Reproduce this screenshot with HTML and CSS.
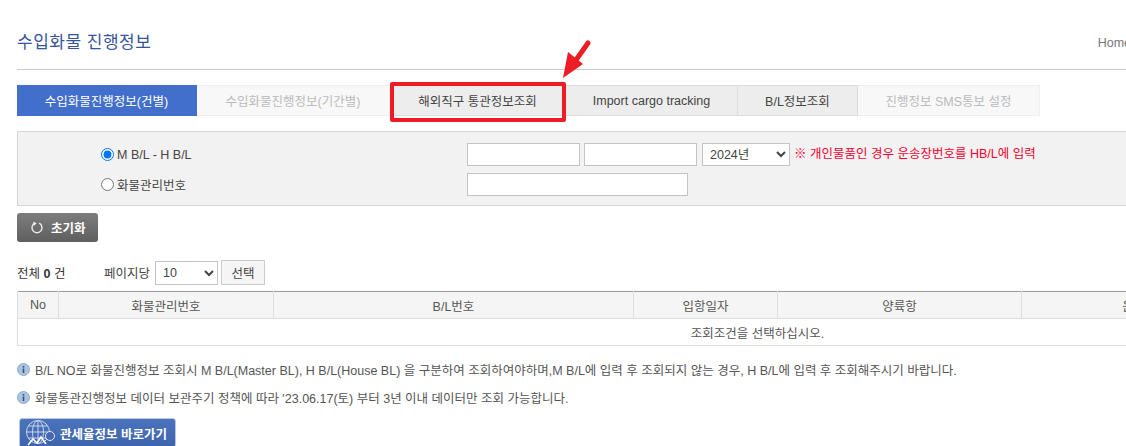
FILE: index.html
```html
<!DOCTYPE html>
<html lang="ko">
  <head>
    <meta charset="UTF-8" />
    <meta name="viewport" content="width=device-width, initial-scale=1.0" />
    <title>수입화물 진행정보</title>
    <link rel="stylesheet" href="styles.css">
  </head>
  <body>
    <div class="page">
      <div class="head">
        <h1 class="title">수입화물 진행정보</h1>
        <span class="home">Home</span>
      </div>

      <ul class="tabs">
        <li class="tab tab-active">수입화물진행정보(건별)</li>
        <li class="tab tab-off">수입화물진행정보(기간별)</li>
        <li class="tab tab-on">해외직구 통관정보조회</li>
        <li class="tab tab-on">Import cargo tracking</li>
        <li class="tab tab-on">B/L정보조회</li>
        <li class="tab tab-off">진행정보 SMS통보 설정</li>
      </ul>

      <form class="search">
        <div class="search-row">
          <label class="radio-label"><input type="radio" name="kind" checked />M B/L - H B/L</label>
          <input type="text" class="text-box" />
          <input type="text" class="text-box" />
          <select class="year"><option>2024년</option></select>
          <span class="warn">※ 개인물품인 경우 운송장번호를 HB/L에 입력</span>
        </div>
        <div class="search-row">
          <label class="radio-label"><input type="radio" name="kind" />화물관리번호</label>
          <input type="text" class="text-box text-wide" />
        </div>
      </form>

      <button type="button" class="reset">
        <svg width="14" height="14" viewBox="0 0 14 14"><path d="M4.800 2.200a5 5 0 1 0 4.400 0" fill="none" stroke="#eee" stroke-width="1.400"/><path d="M3.400.600 6.600 2.300 4 4.800z" fill="#eee"/></svg>
        초기화
      </button>

      <div class="list-bar">
        <span class="total">전체 <b>0</b> 건</span>
        <span class="per-page">페이지당</span>
        <select class="per-select"><option>10</option></select>
        <button type="button" class="pick">선택</button>
      </div>

      <table class="result">
        <colgroup>
          <col class="c-no"><col class="c-id"><col class="c-bl"><col class="c-date"><col class="c-port"><col class="c-ship"><col class="c-last">
        </colgroup>
        <thead>
          <tr><th>No</th><th>화물관리번호</th><th>B/L번호</th><th>입항일자</th><th>양륙항</th><th>운송사</th><th>진행상태</th></tr>
        </thead>
        <tbody>
          <tr><td colspan="7">조회조건을 선택하십시오.</td></tr>
        </tbody>
      </table>

      <p class="note">
        <svg class="info" width="13" height="13" viewBox="0 0 13 13"><circle cx="6.500" cy="6.500" r="6" fill="#a9c4e2" stroke="#8fa9c6"/><rect x="5.700" y="5.500" width="1.600" height="4.500" fill="#3d4f66"/><rect x="5.700" y="3" width="1.600" height="1.600" fill="#3d4f66"/></svg>
        B/L NO로 화물진행정보 조회시 M B/L(Master BL), H B/L(House BL) 을 구분하여 조회하여야하며,M B/L에 입력 후 조회되지 않는 경우, H B/L에 입력 후 조회해주시기 바랍니다.
      </p>
      <p class="note">
        <svg class="info" width="13" height="13" viewBox="0 0 13 13"><circle cx="6.500" cy="6.500" r="6" fill="#a9c4e2" stroke="#8fa9c6"/><rect x="5.700" y="5.500" width="1.600" height="4.500" fill="#3d4f66"/><rect x="5.700" y="3" width="1.600" height="1.600" fill="#3d4f66"/></svg>
        화물통관진행정보 데이터 보관주기 정책에 따라 '23.06.17(토) 부터 3년 이내 데이터만 조회 가능합니다.
      </p>

      <a class="rate-link">
        <svg width="32" height="28" viewBox="0 0 32 28">
          <g fill="none" stroke="#c9d6ee" stroke-width="1">
            <circle cx="13" cy="13" r="11.500"/>
            <ellipse cx="13" cy="13" rx="5.500" ry="11.500"/>
            <path d="M13 1.500v23M1.500 13h23M3.500 7h19M3.500 19h19"/>
          </g>
          <circle cx="25" cy="17" r="4.500" fill="#4468b2" stroke="#dfe7f6"/>
          <path d="M3 26l5-6 4 4 4-6 5 7" fill="none" stroke="#fff" stroke-width="1.600"/>
        </svg>
        관세율정보 바로가기
      </a>

      <div class="callout"></div>
      <svg class="arrow" width="34" height="42" viewBox="0 0 34 42">
        <path d="M29 3 17 20" stroke="#ee1c25" stroke-width="5" stroke-linecap="round" fill="none"/>
        <path d="M4 38 9 12 24 24z" fill="#ee1c25"/>
      </svg>
    </div>
  </body>
</html>
```

FILE: styles.css
```css
* {
  box-sizing: border-box;
}

html, body {
  margin: 0;
  height: 446px;
  overflow: hidden;
  background: #fff;
}

body {
  font-family: "Liberation Sans", "Noto Sans CJK KR", sans-serif;
  font-size: 12.5px;
  color: #555;
}

.page {
  position: relative;
  width: 1500px;
  padding-left: 17px;
}

.head {
  display: flex;
  justify-content: space-between;
  width: 1114px;
  height: 69px;
  padding: 31px 0 0;
}

.title {
  margin: 0;
  font-size: 17px;
  line-height: 24px;
  letter-spacing: .5px;
  font-weight: 400;
  color: #36549c;
}

.home {
  padding-top: 5px;
  color: #777;
}

.tabs {
  display: flex;
  list-style: none;
  height: 47px;
  margin: 0 0 15px;
  padding: 15px 0 0;
  border-top: 1px solid #ccc;
}

.tab {
  display: flex;
  align-items: center;
  justify-content: center;
  border: 1px solid #e2e2e2;
  border-left: 0;
}

.tab:nth-child(1) { width: 180px; }
.tab:nth-child(2) { width: 193px; }
.tab:nth-child(3) { width: 176px; }
.tab:nth-child(4) { width: 172px; }
.tab:nth-child(5) { width: 120px; }
.tab:nth-child(6) { width: 182px; }

.tab-active {
  background: #426fcb;
  border-color: #426fcb;
  color: #fff;
}

.tab-off {
  background: #f8f8f8;
  border-color: #efefef;
  color: #bbb;
}

.tab-on {
  background: #ededed;
  border-color: #dcdcdc;
  color: #444;
}

.search {
  height: 75px;
  padding: 11px 0 0 83px;
  background: #f2f2f2;
  border: 1px solid #d6d6d6;
}

.search-row {
  display: flex;
  align-items: center;
  height: 23px;
  margin-bottom: 7px;
}

.radio-label {
  display: flex;
  align-items: center;
  width: 366px;
  color: #444;
}

.radio-label input {
  width: 13px;
  height: 13px;
  margin: 0 3px 0 0;
}

.text-box {
  width: 113px;
  height: 23px;
  margin-right: 4px;
  border: 1px solid #c4c4c4;
  background: #fff;
}

.text-wide {
  width: 221px;
}

.year {
  width: 88px;
  height: 23px;
  margin-left: 1px;
  padding-left: 3px;
  border: 1px solid #c4c4c4;
  background: #fff;
  font: inherit;
  color: #444;
}

.warn {
  margin-left: 4px;
  padding-bottom: 5px;
  color: #f5002f;
}

.reset {
  display: flex;
  align-items: center;
  gap: 7px;
  width: 81px;
  height: 29px;
  margin-top: 7px;
  padding: 0 0 0 13px;
  border: 0;
  border-radius: 3px;
  background: linear-gradient(#7d7d7d, #5f5f5f);
  color: #fff;
  font: inherit;
  font-weight: 700;
}

.list-bar {
  display: flex;
  align-items: center;
  height: 25px;
  margin-top: 18px;
}

.total {
  width: 87px;
  color: #333;
}

.per-page {
  width: 51px;
  color: #444;
  white-space: nowrap;
}

.per-select {
  width: 63px;
  height: 24px;
  padding-left: 3px;
  border: 1px solid #c4c4c4;
  background: #fff;
  font: inherit;
  color: #444;
}

.pick {
  width: 44px;
  height: 25px;
  margin-left: 3px;
  padding: 0;
  border: 1px solid #ccc;
  background: #f5f5f5;
  font: inherit;
  color: #444;
}

.result {
  width: 1480px;
  margin-top: 6px;
  border-collapse: collapse;
  table-layout: fixed;
  border-top: 1px solid #999;
}

.c-no { width: 41px; }
.c-id { width: 215px; }
.c-bl { width: 360px; }
.c-date { width: 144px; }
.c-port { width: 244px; }
.c-ship { width: 236px; }
.c-last { width: 240px; }

.result th {
  height: 27px;
  padding: 0;
  background: #f5f5f5;
  border: 1px solid #dedede;
  border-top: 0;
  font-weight: 400;
  color: #555;
}

.result td {
  height: 27px;
  padding: 0;
  border: 1px solid #dedede;
  text-align: center;
  color: #555;
}

.note {
  display: flex;
  align-items: center;
  gap: 5px;
  height: 18px;
  margin: 14px 0 10px;
  color: #555;
}

.note + .note {
  margin-top: 10px;
}

.info {
  flex: none;
}

.rate-link {
  display: flex;
  align-items: center;
  gap: 3px;
  width: 157px;
  height: 30px;
  margin: 12px 0 0 2px;
  padding-left: 5px;
  border: 1px solid #b9c8e2;
  border-radius: 3px;
  background: linear-gradient(#4b74bc, #3e63ad);
  color: #fff;
  font-weight: 700;
}

.callout {
  position: absolute;
  left: 390px;
  top: 82px;
  width: 176px;
  height: 40px;
  border: 4px solid #ee1c25;
  border-radius: 2px;
}

.arrow {
  position: absolute;
  left: 559px;
  top: 40px;
}
```
